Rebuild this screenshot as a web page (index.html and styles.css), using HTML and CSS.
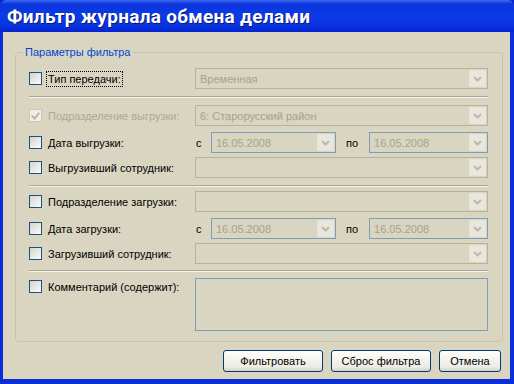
FILE: index.html
```html
<!DOCTYPE html>
<html lang="ru">
<head>
    <meta charset="UTF-8">
    <meta name="viewport" content="width=device-width, initial-scale=1.0">
    <title>Фильтр журнала обмена делами</title>
    <link rel="stylesheet" href="styles.css">
</head>
<body>
    <div class="window">
        <div class="titlebar">Фильтр журнала обмена делами</div>
        <div class="client">
            <fieldset class="group">
                <legend>Параметры фильтра</legend>

                <div class="row">
                    <div class="check"><span class="box"></span><span class="focus">Тип передачи:</span></div>
                    <div class="combo"><span class="value">Временная</span><span class="drop"></span></div>
                </div>

                <div class="sep sep-first"></div>

                <div class="row">
                    <div class="check disabled"><span class="box checked"></span><span>Подразделение выгрузки:</span></div>
                    <div class="combo"><span class="value">6: Старорусский район</span><span class="drop"></span></div>
                </div>
                <div class="row gap-6">
                    <div class="check"><span class="box"></span><span>Дата выгрузки:</span></div>
                    <div class="dates">
                        <span class="pre">с</span>
                        <div class="combo date first"><span class="value">16.05.2008</span><span class="drop"></span></div>
                        <span class="mid">по</span>
                        <div class="combo date"><span class="value">16.05.2008</span><span class="drop"></span></div>
                    </div>
                </div>
                <div class="row gap-4">
                    <div class="check"><span class="box"></span><span>Выгрузивший сотрудник:</span></div>
                    <div class="combo"><span class="value"></span><span class="drop"></span></div>
                </div>

                <div class="sep sep-second"></div>

                <div class="row">
                    <div class="check"><span class="box"></span><span>Подразделение загрузки:</span></div>
                    <div class="combo"><span class="value"></span><span class="drop"></span></div>
                </div>
                <div class="row gap-6">
                    <div class="check"><span class="box"></span><span>Дата загрузки:</span></div>
                    <div class="dates">
                        <span class="pre">с</span>
                        <div class="combo date first"><span class="value">16.05.2008</span><span class="drop"></span></div>
                        <span class="mid">по</span>
                        <div class="combo date"><span class="value">16.05.2008</span><span class="drop"></span></div>
                    </div>
                </div>
                <div class="row gap-4">
                    <div class="check"><span class="box"></span><span>Загрузивший сотрудник:</span></div>
                    <div class="combo"><span class="value"></span><span class="drop"></span></div>
                </div>

                <div class="sep sep-third"></div>

                <div class="row row-memo">
                    <div class="check"><span class="box"></span><span>Комментарий (содержит):</span></div>
                    <div class="memo"></div>
                </div>
            </fieldset>

            <div class="buttons">
                <div class="btn btn-wide">Фильтровать</div>
                <div class="btn btn-wide">Сброс фильтра</div>
                <div class="btn">Отмена</div>
            </div>
        </div>
    </div>
</body>
</html>
```

FILE: styles.css
```css
body {
    margin: 0;
    background: #0a24c8;
    font-family: "Liberation Sans", Arial, sans-serif;
    font-size: 11px;
    color: #000;
}
.window {
    width: 514px;
    height: 384px;
    background: #0a2ed8;
    border-radius: 6px 6px 0 0;
    box-sizing: border-box;
    overflow: hidden;
    display: flex;
    flex-direction: column;
}
.titlebar {
    height: 32px;
    padding: 1px 0 0 7px;
    box-sizing: border-box;
    display: flex;
    align-items: center;
    background: linear-gradient(#3c6cf4 0, #0c34dc 4px, #0a3ae6 45%, #0a36e2 75%, #0424d0 100%);
    color: #fff;
    font-family: Roboto, "DejaVu Sans", sans-serif;
    font-weight: 700;
    font-size: 19px;
    letter-spacing: 0.3px;
    text-shadow: 1px 1px 0 #0a1a78;
}
.client {
    flex: 1;
    margin: 0 4px 5px 3px;
    background: #d9d5c0;
    display: flex;
    flex-direction: column;
}
.group {
    margin: 14px 7px 0 12px;
    padding: 9px 14px 10px 13px;
    border: 1px solid #c6c3ae;
    border-radius: 4px;
    min-width: 0;
}
.group legend {
    margin-left: -6px;
    padding: 0 2px;
    line-height: 13px;
    color: #0046d5;
}
.row {
    display: grid;
    grid-template-columns: 166px 1fr;
    align-items: center;
    height: 21px;
}
.gap-6 { margin-top: 6px; }
.gap-4 { margin-top: 4px; }
.check {
    display: flex;
    align-items: center;
    gap: 6px;
    white-space: nowrap;
}
.check.disabled { color: #aca899; }
.box {
    width: 11px;
    height: 11px;
    border: 1px solid #1c5180;
    background: linear-gradient(135deg, #d6d4ca 0%, #f4f4f0 80%, #fff 100%);
    flex: none;
    position: relative;
}
.box.checked {
    border-color: #cac8bb;
    background: #f0efe8;
}
.box.checked::after {
    content: "";
    position: absolute;
    left: 3px;
    top: 1px;
    width: 3px;
    height: 6px;
    border: solid #b8b6a6;
    border-width: 0 2px 2px 0;
    transform: rotate(40deg);
}
.focus {
    outline: 1px dotted #000;
    outline-offset: 0;
    padding: 0 1px;
    margin-left: -1px;
    line-height: 14px;
}
.combo {
    height: 21px;
    box-sizing: border-box;
    border: 1px solid #b5b29e;
    display: flex;
    align-items: center;
    padding: 1px;
    color: #a5a290;
}
.combo .value {
    flex: 1;
    padding-left: 3px;
    white-space: nowrap;
    overflow: hidden;
}
.drop {
    width: 17px;
    height: 17px;
    box-sizing: border-box;
    border: 1px solid #e6e4da;
    background: #e9e7dd url("data:image/svg+xml,%3Csvg xmlns='http://www.w3.org/2000/svg' width='9' height='6'%3E%3Cpath d='M1 1l3.5 3.5L8 1' fill='none' stroke='%23bcb9a8' stroke-width='2'/%3E%3C/svg%3E") no-repeat center;
    flex: none;
}
.dates {
    display: flex;
    align-items: center;
}
.pre {
    width: 16px;
    padding-left: 1px;
    box-sizing: border-box;
}
.mid {
    margin: 0 11px 0 10px;
}
.combo.date {
    border-color: #7f9db9;
    flex: 1;
}
.combo.date.first {
    flex: none;
    width: 125px;
}
.sep {
    height: 1px;
    border-top: 1px solid #a9a693;
    background: #f3f2ec;
}
.sep-first { margin: 7px 0 7px; }
.sep-second { margin: 7px 0 4px; }
.sep-third { margin: 6px 0 6px; }
.row-memo {
    height: auto;
    align-items: start;
}
.row-memo .check { padding-top: 2px; }
.memo {
    height: 53px;
    box-sizing: border-box;
    border: 1px solid #7f9db9;
}
.buttons {
    display: flex;
    justify-content: flex-end;
    gap: 8px;
    margin: 8px 9px 0 0;
}
.btn {
    width: 62px;
    height: 22px;
    box-sizing: border-box;
    border: 1px solid #003c74;
    border-radius: 3px;
    background: linear-gradient(#ffffff 0%, #f5f4ee 40%, #ecebe4 80%, #d6d0c5 100%);
    display: flex;
    align-items: center;
    justify-content: center;
}
.btn-wide { width: 100px; }
```
